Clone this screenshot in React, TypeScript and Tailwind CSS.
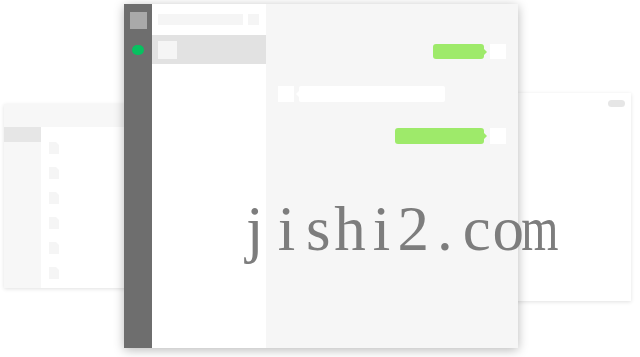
import React from "react";

const Doc = () => (
  <svg width="10" height="12" viewBox="0 0 10 12" className="block">
    <path d="M0 0H7L10 3V12H0Z" fill="#f5f5f5" />
  </svg>
);

const chars = ["j", "i", "s", "h", "i", "2", ".", "c", "o", "m"];

export default function App() {
  return (
    <div className="relative w-[640px] h-[357px] bg-white overflow-hidden">
      {/* left back window */}
      <div className="absolute left-[4px] top-[104px] w-[220px] h-[184px] bg-white flex flex-col shadow-[0_1px_4px_rgba(0,0,0,0.12)]">
        <div className="h-[23px] bg-[#f7f7f7]" />
        <div className="flex flex-1">
          <div className="w-[37px] bg-[#f7f7f7] flex flex-col">
            <div className="h-[15px] bg-[#e6e6e6]" />
          </div>
          <div className="flex flex-col pl-[8px] pt-[15px] gap-[13px]">
            <Doc />
            <Doc />
            <Doc />
            <Doc />
            <Doc />
            <Doc />
          </div>
        </div>
      </div>

      {/* right back window */}
      <div className="absolute left-[400px] top-[93px] w-[231px] h-[208px] bg-white shadow-[0_1px_4px_rgba(0,0,0,0.12)] flex justify-end pt-[7px] pr-[6px]">
        <div className="w-[17px] h-[7px] rounded-full bg-[#e6e6e6]" />
      </div>

      {/* main window */}
      <div className="absolute left-[124px] top-[4px] w-[394px] h-[344px] flex shadow-[0_2px_10px_rgba(0,0,0,0.28)]">
        <div className="w-[28px] bg-[#6e6e6e] flex flex-col items-center pt-[8px]">
          <div className="w-[17px] h-[17px] bg-[#a9a9a9]" />
          <div className="mt-[16px] w-[12px] h-[10px] rounded-full bg-[#07c160]" />
        </div>
        <div className="w-[114px] bg-white flex flex-col">
          <div className="flex items-center gap-[5px] px-[6px] h-[31px]">
            <div className="w-[85px] h-[11px] bg-[#f5f5f5]" />
            <div className="w-[11px] h-[11px] bg-[#f5f5f5]" />
          </div>
          <div className="h-[29px] bg-[#e2e2e2] flex items-center px-[6px]">
            <div className="w-[19px] h-[18px] bg-[#f5f5f5]" />
          </div>
        </div>
        <div className="flex-1 bg-[#f6f6f6] flex flex-col px-[12px] pt-[40px]">
          <div className="flex justify-end items-center">
            <div className="w-[51px] h-[15px] rounded-[3px] bg-[#9eea6a]" />
            <div className="w-0 h-0 border-y-[3px] border-y-transparent border-l-[3px] border-l-[#9eea6a]" />
            <div className="ml-[3px] w-[16px] h-[15px] bg-white" />
          </div>
          <div className="flex items-center mt-[27px]">
            <div className="w-[16px] h-[16px] bg-white" />
            <div className="w-0 h-0 border-y-[3px] border-y-transparent border-r-[3px] border-r-white ml-[2px]" />
            <div className="w-[146px] h-[16px] rounded-[2px] bg-white" />
          </div>
          <div className="flex justify-end items-center mt-[26px]">
            <div className="w-[89px] h-[16px] rounded-[3px] bg-[#9eea6a]" />
            <div className="w-0 h-0 border-y-[3px] border-y-transparent border-l-[3px] border-l-[#9eea6a]" />
            <div className="ml-[3px] w-[16px] h-[16px] bg-white" />
          </div>
        </div>
      </div>

      {/* watermark */}
      <div className="absolute left-[239px] top-[194px] flex text-[63px] leading-[70px] text-[#7d7d7d] whitespace-nowrap font-['Liberation_Serif',serif]">
        {chars.map((c, i) => (
          <span key={i} className={`w-[31.7px] flex justify-center ${c === "m" ? "scale-x-[0.76]" : ""}`}>
            {c}
          </span>
        ))}
      </div>
    </div>
  );
}
